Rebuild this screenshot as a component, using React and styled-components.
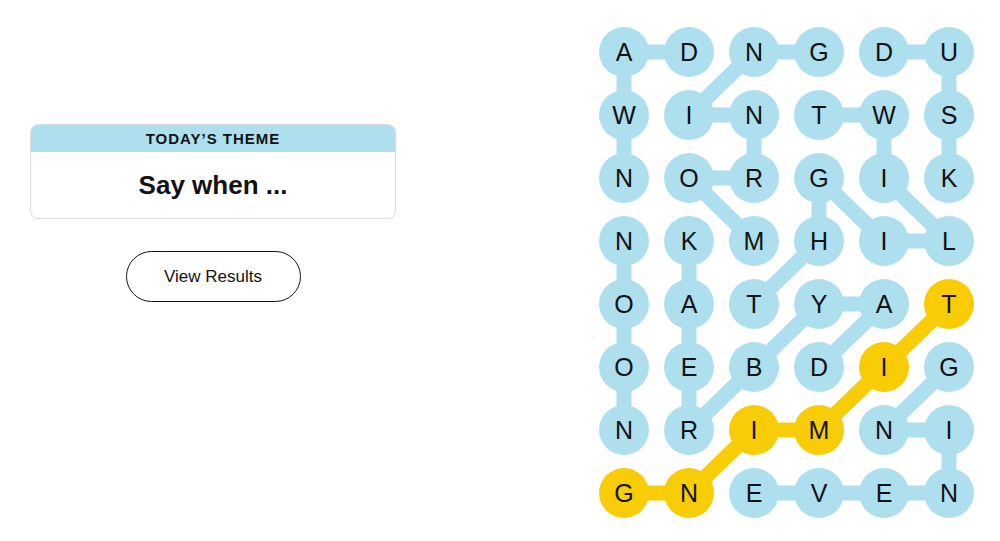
import React from "react";
import styled, { createGlobalStyle } from "styled-components";

const GlobalStyle = createGlobalStyle`
  html, body {
    margin: 0;
    padding: 0;
    background: #ffffff;
  }
  body {
    font-family: "Liberation Sans", Arial, sans-serif;
    color: #000;
  }
`;

const BLUE = "#aedfee";
const YELLOW = "#f8cd05";
const CELL = 50;
const COL_GAP = 15;
const ROW_GAP = 13;

const GRID = [
  "ADNGDU",
  "WINTWS",
  "NORGIK",
  "NKMHIL",
  "OATYAT",
  "OEBDIG",
  "NRIMNI",
  "GNEVEN",
];

const BLUE_LINKS = [
  [[0, 0], [0, 1]], [[0, 0], [1, 0]], [[1, 0], [2, 0]],
  [[0, 2], [0, 3]], [[0, 2], [1, 1]], [[1, 1], [1, 2]], [[1, 2], [2, 2]],
  [[2, 2], [2, 1]], [[2, 1], [3, 2]],
  [[0, 4], [0, 5]], [[0, 5], [1, 5]], [[1, 5], [2, 5]],
  [[1, 3], [1, 4]], [[1, 4], [2, 4]], [[2, 4], [3, 5]], [[3, 5], [3, 4]],
  [[3, 4], [2, 3]], [[2, 3], [3, 3]], [[3, 3], [4, 2]],
  [[4, 3], [4, 4]], [[4, 3], [5, 2]], [[4, 4], [5, 3]], [[5, 2], [6, 1]],
  [[6, 1], [5, 1]], [[5, 1], [4, 1]], [[4, 1], [3, 1]],
  [[3, 0], [4, 0]], [[4, 0], [5, 0]], [[5, 0], [6, 0]],
  [[5, 5], [6, 4]], [[6, 4], [6, 5]], [[6, 5], [7, 5]],
  [[7, 2], [7, 3]], [[7, 3], [7, 4]], [[7, 4], [7, 5]],
];

const YELLOW_LINKS = [
  [[4, 5], [5, 4]], [[5, 4], [6, 3]], [[6, 3], [6, 2]],
  [[6, 2], [7, 1]], [[7, 1], [7, 0]],
];

const SPANGRAM = new Set(["4,5", "5,4", "6,3", "6,2", "7,1", "7,0"]);

const Page = styled.main`
  display: flex;
  justify-content: space-between;
  align-items: flex-start;
  padding: 27px 26px 0 30px;
  min-height: 541px;
  box-sizing: border-box;
`;

const SidePanel = styled.section`
  width: 366px;
  margin-top: 97px;
  display: flex;
  flex-direction: column;
  align-items: center;
  gap: 32px;
`;

const ThemeCard = styled.div`
  width: 100%;
  border: 1px solid #dcdcdc;
  border-radius: 8px;
  overflow: hidden;
  box-sizing: border-box;
`;

const ThemeHeader = styled.div`
  background: ${BLUE};
  height: 27px;
  display: flex;
  align-items: center;
  justify-content: center;
  font-family: "Liberation Sans", Arial, sans-serif;
  font-weight: 700;
  font-size: 15px;
  letter-spacing: 1px;
  color: #121212;
`;

const ThemeBody = styled.div`
  height: 66px;
  display: flex;
  align-items: center;
  justify-content: center;
  font-family: "Liberation Sans", Arial, sans-serif;
  font-weight: 700;
  font-size: 26px;
  color: #121212;
`;

const ResultsButton = styled.button`
  width: 175px;
  height: 51px;
  border: 1px solid #121212;
  border-radius: 26px;
  background: #fff;
  font-family: "Liberation Sans", Arial, sans-serif;
  font-size: 17px;
  color: #121212;
  cursor: pointer;
`;

const Board = styled.div`
  position: relative;
  display: grid;
  grid-template-columns: repeat(6, ${CELL}px);
  grid-auto-rows: ${CELL}px;
  column-gap: ${COL_GAP}px;
  row-gap: ${ROW_GAP}px;
`;

const Links = styled.svg`
  position: absolute;
  inset: 0;
  width: 100%;
  height: 100%;
  pointer-events: none;
`;

const Tile = styled.div`
  position: relative;
  z-index: 1;
  width: ${CELL}px;
  height: ${CELL}px;
  border-radius: 50%;
  background: ${(p) => (p.$found ? YELLOW : BLUE)};
  display: flex;
  align-items: center;
  justify-content: center;
  font-family: "Liberation Sans", Arial, sans-serif;
  font-size: 25px;
  color: #121212;
`;

const center = ([r, c]) => ({
  x: c * (CELL + COL_GAP) + CELL / 2,
  y: r * (CELL + ROW_GAP) + CELL / 2,
});

function LinkLines({ links, color }) {
  return links.map(([a, b], i) => {
    const p = center(a);
    const q = center(b);
    return (
      <line
        key={i}
        x1={p.x}
        y1={p.y}
        x2={q.x}
        y2={q.y}
        stroke={color}
        strokeWidth="15"
      />
    );
  });
}

export default function App() {
  return (
    <>
      <GlobalStyle />
      <Page>
        <SidePanel>
          <ThemeCard>
            <ThemeHeader>TODAY’S THEME</ThemeHeader>
            <ThemeBody>Say when ...</ThemeBody>
          </ThemeCard>
          <ResultsButton>View Results</ResultsButton>
        </SidePanel>
        <Board>
          <Links>
            <LinkLines links={BLUE_LINKS} color={BLUE} />
            <LinkLines links={YELLOW_LINKS} color={YELLOW} />
          </Links>
          {GRID.flatMap((row, r) =>
            row.split("").map((ch, c) => (
              <Tile key={`${r}-${c}`} $found={SPANGRAM.has(`${r},${c}`)}>
                {ch}
              </Tile>
            ))
          )}
        </Board>
      </Page>
    </>
  );
}
